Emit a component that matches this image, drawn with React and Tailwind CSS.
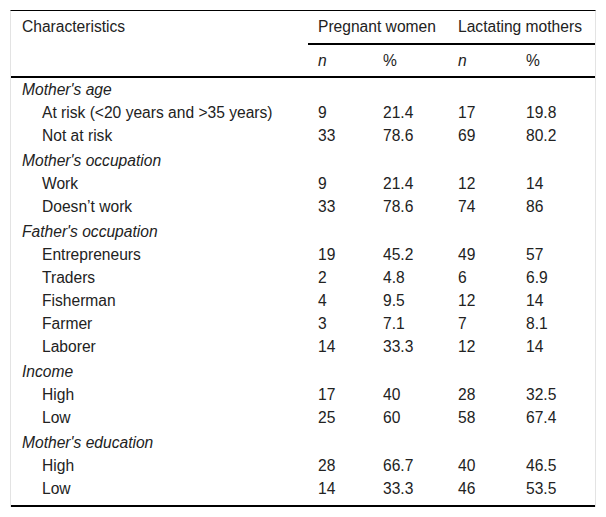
const sections = [
  {
    title: "Mother's age",
    rows: [
      ["At risk (<20 years and >35 years)", "9", "21.4", "17", "19.8"],
      ["Not at risk", "33", "78.6", "69", "80.2"],
    ],
  },
  {
    title: "Mother's occupation",
    rows: [
      ["Work", "9", "21.4", "12", "14"],
      ["Doesn\u2019t work", "33", "78.6", "74", "86"],
    ],
  },
  {
    title: "Father's occupation",
    rows: [
      ["Entrepreneurs", "19", "45.2", "49", "57"],
      ["Traders", "2", "4.8", "6", "6.9"],
      ["Fisherman", "4", "9.5", "12", "14"],
      ["Farmer", "3", "7.1", "7", "8.1"],
      ["Laborer", "14", "33.3", "12", "14"],
    ],
  },
  {
    title: "Income",
    rows: [
      ["High", "17", "40", "28", "32.5"],
      ["Low", "25", "60", "58", "67.4"],
    ],
  },
  {
    title: "Mother's education",
    rows: [
      ["High", "28", "66.7", "40", "46.5"],
      ["Low", "14", "33.3", "46", "53.5"],
    ],
  },
];

const DataRow = ({ row }) => (
  <div className="flex h-[23px] leading-[23px]">
    <div className="w-[297px] pl-[31px]">{row[0]}</div>
    <div className="w-[65px] pl-[10px]">{row[1]}</div>
    <div className="w-[75px] pl-[10px]">{row[2]}</div>
    <div className="w-[68px] pl-[10px]">{row[3]}</div>
    <div className="flex-1 pl-[10px]">{row[4]}</div>
  </div>
);

const App = () => {
  return (
    <div className="bg-white w-[606px] h-[517px] pt-[10px] pl-[10px] text-[15.6px] text-[#222] font-['Liberation_Sans',Arial,sans-serif]">
      <div className="w-[586px] border-t border-t-black border-l border-r border-l-[#e3e3e3] border-r-[#e3e3e3]">
        {/* header */}
        <div className="flex">
          <div className="w-[297px] pl-[11px] h-[65px] leading-[32px]">Characteristics</div>
          <div className="flex-1">
            <div className="flex h-[34px] leading-[32px] border-b-2 border-black">
              <div className="w-[140px] pl-[10px]">Pregnant women</div>
              <div className="flex-1 pl-[10px]">Lactating mothers</div>
            </div>
            <div className="flex h-[31px] leading-[31px] italic">
              <div className="w-[65px] pl-[10px]">n</div>
              <div className="w-[75px] pl-[10px] not-italic">%</div>
              <div className="w-[68px] pl-[10px]">n</div>
              <div className="flex-1 pl-[10px] not-italic">%</div>
            </div>
          </div>
        </div>
        <div className="h-[2px] bg-black"></div>

        {/* body */}
        <div className="pb-[5px] border-b-2 border-black">
          {sections.map((section, i) => (
            <div key={section.title}>
              <div className={`${i === 0 ? "h-[23px]" : "h-[25px] pt-[2px]"} leading-[23px] pl-[11px] italic`}>
                {section.title}
              </div>
              {section.rows.map((row, j) => (
                <DataRow key={j} row={row} />
              ))}
            </div>
          ))}
        </div>
      </div>
    </div>
  );
};

export default App;
